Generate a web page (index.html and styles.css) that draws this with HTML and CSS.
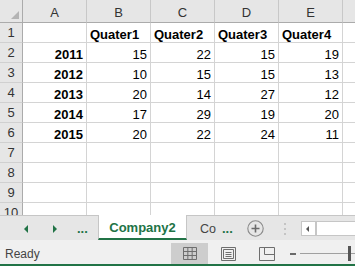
FILE: index.html
```html
<!DOCTYPE html>
<html>
<head>
<meta charset="utf-8">
<link rel="stylesheet" href="styles.css">
</head>
<body>
<div class="app">
  <div class="sheet">
    <div class="h corner"><svg width="8" height="8" viewBox="0 0 8 8"><polygon points="8,0 8,8 0,8" fill="#b4b4b4"/></svg></div>
    <div class="h col">A</div><div class="h col">B</div><div class="h col">C</div><div class="h col">D</div><div class="h col">E</div><div class="h col last"></div>

    <div class="rh">1</div><div class="c"></div><div class="c b">Quater1</div><div class="c b">Quater2</div><div class="c b">Quater3</div><div class="c b">Quater4</div><div class="c last"></div>
    <div class="rh">2</div><div class="c n b">2011</div><div class="c n">15</div><div class="c n">22</div><div class="c n">15</div><div class="c n">19</div><div class="c last"></div>
    <div class="rh">3</div><div class="c n b">2012</div><div class="c n">10</div><div class="c n">15</div><div class="c n">15</div><div class="c n">13</div><div class="c last"></div>
    <div class="rh">4</div><div class="c n b">2013</div><div class="c n">20</div><div class="c n">14</div><div class="c n">27</div><div class="c n">12</div><div class="c last"></div>
    <div class="rh">5</div><div class="c n b">2014</div><div class="c n">17</div><div class="c n">29</div><div class="c n">19</div><div class="c n">20</div><div class="c last"></div>
    <div class="rh">6</div><div class="c n b">2015</div><div class="c n">20</div><div class="c n">22</div><div class="c n">24</div><div class="c n">11</div><div class="c last"></div>
    <div class="rh">7</div><div class="c"></div><div class="c"></div><div class="c"></div><div class="c"></div><div class="c"></div><div class="c last"></div>
    <div class="rh">8</div><div class="c"></div><div class="c"></div><div class="c"></div><div class="c"></div><div class="c"></div><div class="c last"></div>
    <div class="rh">9</div><div class="c"></div><div class="c"></div><div class="c"></div><div class="c"></div><div class="c"></div><div class="c last"></div>
    <div class="rh">10</div><div class="c"></div><div class="c"></div><div class="c"></div><div class="c"></div><div class="c"></div><div class="c last"></div>
  </div>

  <div class="tabbar">
    <div class="nav">
      <span class="arr left"></span>
      <span class="arr right"></span>
      <span class="more">...</span>
    </div>
    <div class="tab active">Company2</div>
    <div class="tab inactive">Co</div>
    <span class="more more2">...</span>
    <span class="add"><svg width="17" height="17" viewBox="0 0 17 17"><circle cx="8.5" cy="8.5" r="7.7" fill="none" stroke="#8a8a8a" stroke-width="1.1"/><path d="M8.5 4.5v8M4.5 8.5h8" stroke="#6a6a6a" stroke-width="1.6"/></svg></span>
    <span class="vdots"><i></i><i></i><i></i></span>
    <div class="hscroll"><span class="sbtn"><span class="stri"></span></span></div>
  </div>

  <div class="status">
    <span class="ready">Ready</span>
    <span class="view on"><svg width="14" height="13" viewBox="0 0 14 13"><path d="M.5 .5h13v12h-13z M.5 4.5h13 M.5 8.5h13 M4.83 .5v12 M9.17 .5v12" fill="none" stroke="#6e6e6e"/></svg></span>
    <span class="view pl"><svg width="15" height="14" viewBox="0 0 15 14"><path d="M.5 .5h14v13h-14z M2.5 2.5h10v9h-10z M4.5 5.5h6 M4.5 7.5h6 M4.5 9.5h6" fill="none" stroke="#6e6e6e"/></svg></span>
    <span class="view pb"><svg width="16" height="14" viewBox="0 0 16 14"><path d="M.5 .5h15v13h-15z M5.5 .5v7h10" fill="none" stroke="#6e6e6e"/></svg></span>
    <span class="minus"></span>
    <span class="slider"><span class="thumb"></span></span>
  </div>
</div>
</body>
</html>
```

FILE: styles.css
```css
html, body {
  margin: 0;
  padding: 0;
  background: #ffffff;
}
.app {
  width: 355px;
  height: 266px;
  overflow: hidden;
  display: flex;
  flex-direction: column;
  font-family: "Liberation Sans", Arial, sans-serif;
}
.sheet {
  height: 215px;
  flex: none;
  overflow: hidden;
  display: grid;
  grid-template-columns: 23px repeat(5, 64px) 20px;
  grid-template-rows: 23px;
  grid-auto-rows: 20px;
}
.h {
  box-sizing: border-box;
  background: #e6e6e6;
  border-bottom: 1px solid #ababab;
  border-right: 1px solid #c8c8c8;
  color: #333;
  font-size: 13px;
  display: flex;
  align-items: center;
  justify-content: center;
  padding-top: 3px;
}
.corner {
  border-right: 1px solid #ababab;
  align-items: flex-end;
  justify-content: flex-end;
  padding: 0 3px 3px 0;
}
.rh {
  box-sizing: border-box;
  background: #e6e6e6;
  border-right: 1px solid #ababab;
  border-bottom: 1px solid #d0d0d0;
  color: #333;
  font-size: 13px;
  display: flex;
  align-items: center;
  justify-content: center;
}
.c {
  box-sizing: border-box;
  border-right: 1px solid #d4d4d4;
  border-bottom: 1px solid #d4d4d4;
  font-size: 13px;
  line-height: 14px;
  color: #000;
  display: flex;
  align-items: flex-end;
  padding: 0 3px 0 3px;
  white-space: nowrap;
}
.n { justify-content: flex-end; }
.b { font-weight: bold; }

.tabbar {
  height: 25px;
  box-sizing: border-box;
  border-top: 1px solid #c6c6c6;
  background: #e6e6e6;
  display: flex;
  align-items: center;
  flex: none;
}
.nav {
  width: 98px;
  flex: none;
  display: flex;
  align-items: center;
  padding-left: 24px;
  box-sizing: border-box;
  height: 100%;
}
.arr {
  width: 0;
  height: 0;
  border-top: 4px solid transparent;
  border-bottom: 4px solid transparent;
  margin-top: 2px;
}
.arr.left { border-right: 4px solid #217346; }
.arr.right { border-left: 4px solid #217346; margin-left: 25px; }
.more {
  color: #217346;
  font-weight: bold;
  font-size: 13px;
  line-height: 14px;
  padding-top: 2px;
}
.nav .more { margin-left: 20px; }
.tab {
  box-sizing: border-box;
  height: 25px;
  margin-top: -1px;
  display: flex;
  align-items: center;
  flex: none;
}
.tab.active {
  width: 89px;
  background: #ffffff;
  border-left: 1px solid #c6c6c6;
  border-right: 1px solid #c6c6c6;
  border-bottom: 2px solid #217346;
  justify-content: center;
  color: #217346;
  font-weight: bold;
  font-size: 13px;
  padding-top: 1px;
}
.tab.inactive {
  margin-top: 0;
  height: 100%;
  width: 30px;
  padding-left: 13px;
  color: #444;
  font-size: 12.5px;
  padding-top: 2px;
  white-space: nowrap;
}
.more2 { margin-left: 5px; }
.add {
  display: flex;
  margin-left: 14px;
  margin-top: 1px;
}
.vdots {
  display: flex;
  flex-direction: column;
  gap: 3px;
  margin-left: 20px;
  margin-top: 1px;
}
.vdots i {
  display: block;
  width: 2px;
  height: 2px;
  background: #c4c4c4;
}
.hscroll {
  flex: 1;
  margin-left: 15px;
  margin-right: -6px;
  height: 15px;
  margin-top: 1px;
  box-sizing: border-box;
  border: 1px solid #c6c6c6;
  background: #ffffff;
  display: flex;
}
.sbtn {
  width: 15px;
  box-sizing: border-box;
  border-right: 2px solid #c6c6c6;
  display: flex;
  align-items: center;
  padding-left: 4px;
}
.stri {
  width: 0;
  height: 0;
  border-top: 3.5px solid transparent;
  border-bottom: 3.5px solid transparent;
  border-right: 3.5px solid #555;
}

.status {
  height: 24px;
  flex: none;
  background: #f0f0f0;
  border-bottom: 2px solid #217346;
  display: flex;
  align-items: center;
}
.ready {
  width: 171px;
  flex: none;
  box-sizing: border-box;
  padding-left: 5px;
  font-size: 12px;
  color: #444;
  padding-top: 3px;
}
.view {
  height: 21px;
  align-self: flex-end;
  display: flex;
  align-items: center;
  justify-content: center;
  width: 37px;
  flex: none;
}
.view.on { background: #cdcdcd; }
.view.pl { width: 40px; }
.view.pb { width: 37px; }
.minus {
  width: 6px;
  height: 2px;
  background: #6a6a6a;
  margin-left: 5px;
  margin-top: 3px;
  flex: none;
}
.slider {
  flex: 1;
  height: 1px;
  background: #a0a0a0;
  margin-left: 4px;
  margin-top: 3px;
  display: flex;
  align-items: center;
  padding-left: 48px;
}
.thumb {
  width: 3px;
  height: 15px;
  background: #555;
  flex: none;
}
```
